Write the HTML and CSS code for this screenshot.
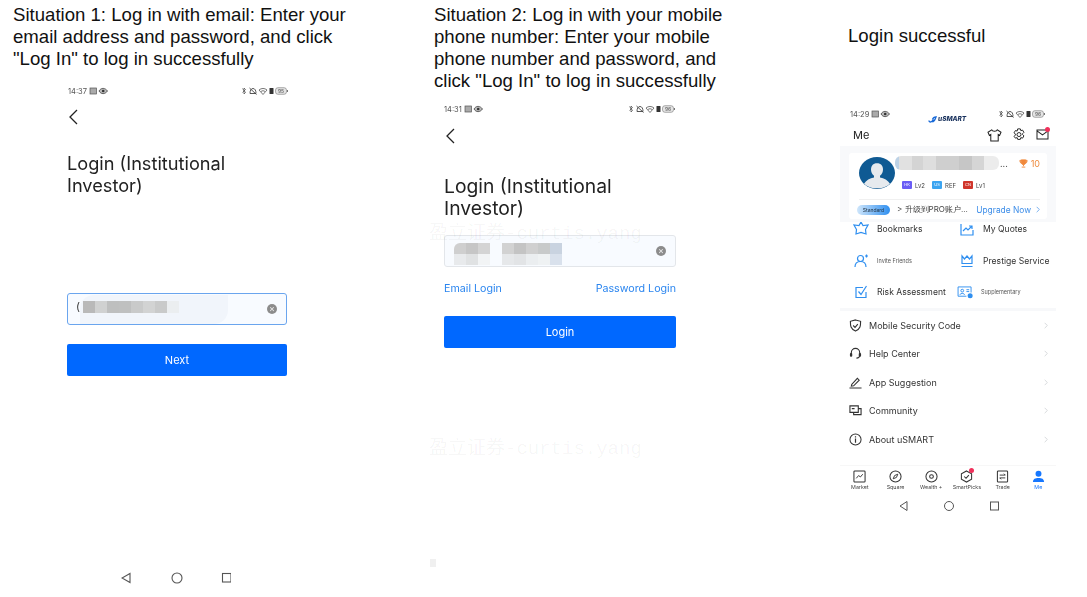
FILE: index.html
```html
<!DOCTYPE html>
<html lang="en">
<head>
    <meta charset="UTF-8">
    <title>Login situations</title>
    <link rel="stylesheet" href="styles.css">
</head>
<body>

    <!-- shared little icons -->
    <svg class="defs" width="0" height="0">
        <symbol id="status-right" viewBox="0 0 48 8">
            <path d="M1.500 1.500l3 4-1.500 1.500v-6l1.500 1.500-3 3" fill="none" stroke="#444" stroke-width=".7"/>
            <path d="M9 6.500c0-3 1-5 3-5s3 2 3 5zM8.500 1l7 6.500" fill="none" stroke="#444" stroke-width=".9"/>
            <path d="M18 3c2.500-2 5.500-2 8 0l-4 4.500zM20 4.500c1.300-1 2.700-1 4 0" fill="none" stroke="#555" stroke-width=".8"/>
            <rect x="28.500" y="1" width="4" height="6" rx=".6" fill="#333"/>
            <rect x="34.500" y=".7" width="11" height="6.600" rx="2.400" fill="#e4e4e4" stroke="#777" stroke-width=".6"/>
            <rect x="46" y="3" width="1" height="2" fill="#777"/>
        </symbol>
        <symbol id="status-left" viewBox="0 0 20 8">
            <rect x="1" y="1" width="6.500" height="6" fill="#aaa" stroke="#555" stroke-width=".7"/>
            <path d="M10 4c2-3.500 6-3.500 8.500 0-2.500 3.500-6.500 3.500-8.500 0z" fill="#bbb" stroke="#444" stroke-width=".8"/>
            <circle cx="14.200" cy="4" r="1.300" fill="#333"/>
        </symbol>
        <symbol id="chevron" viewBox="0 0 6 10">
            <path d="M1 1l4 4-4 4" fill="none" stroke="currentColor" stroke-width="1"/>
        </symbol>
    </svg>

    <main class="page">

        <section class="col col-one">
            <p class="caption">Situation 1: Log in with email: Enter your email address and password, and click "Log In" to log in successfully</p>
            <div class="screen screen-one">
                <div class="status">
                    <span class="time">14:37</span>
                    <svg class="status-left"><use href="#status-left"/></svg>
                    <svg class="status-right"><use href="#status-right"/><text x="37" y="6" class="batt">95</text></svg>
                </div>
                <svg class="back" viewBox="0 0 10 16"><path d="M9 1L2 8l7 7" fill="none" stroke="#222" stroke-width="1.300"/></svg>
                <h1 class="title">Login (Institutional Investor)</h1>
                <div class="field field-focus">
                    <div class="smear"></div>
                    <span class="paren">(</span>
                    <div class="mosaic mosaic-email">
                        <i style="background:#b9b9b9"></i><i style="background:#d0d1d1"></i><i style="background:#bebfbf"></i><i style="background:#bfc0c0"></i><i style="background:#c9caca"></i><i style="background:#d2d3d3"></i><i style="background:#c9caca"></i><i style="background:#ebeef0"></i>
                    </div>
                    <span class="clear">×</span>
                </div>
                <button class="submit">Next</button>
            </div>
            <svg class="nav nav-big" viewBox="0 0 110 12">
                <path d="M9 1.500v9L1 6z" fill="none" stroke="#555" stroke-width="1.100"/>
                <circle cx="56" cy="6" r="5" fill="none" stroke="#555" stroke-width="1.100"/>
                <rect x="101.500" y="1.500" width="8.500" height="8.500" fill="none" stroke="#555" stroke-width="1.100"/>
            </svg>
        </section>

        <section class="col col-two">
            <p class="caption">Situation 2: Log in with your mobile phone number: Enter your mobile phone number and password, and click "Log In" to log in successfully</p>
            <div class="screen screen-two">
                <div class="status">
                    <span class="time">14:31</span>
                    <svg class="status-left"><use href="#status-left"/></svg>
                    <svg class="status-right"><use href="#status-right"/><text x="37" y="6" class="batt">96</text></svg>
                </div>
                <svg class="back" viewBox="0 0 10 16"><path d="M9 1L2 8l7 7" fill="none" stroke="#222" stroke-width="1.300"/></svg>
                <h1 class="title">Login (Institutional Investor)</h1>
                <div class="field">
                    <div class="mosaic mosaic-phone">
                        <i style="background:#cfcfcf"></i><i style="background:#c6c6c6"></i><i style="background:#d4d4d4"></i><b></b><i style="background:#d2d2d2"></i><i style="background:#c4c4c4"></i><i style="background:#d0d0d0"></i><i style="background:#c8caca"></i><i style="background:#c9d3e0"></i>
                        <i style="background:#e8eaec"></i><i style="background:#e0e2e3"></i><i style="background:#f2f4f5"></i><b></b><i style="background:#e6e8ea"></i><i style="background:#e2e4e6"></i><i style="background:#ebeef0"></i><i style="background:#eff2f3"></i><i style="background:#d9e1ec"></i>
                    </div>
                    <span class="clear">×</span>
                </div>
                <div class="links">
                    <a>Email Login</a>
                    <a>Password Login</a>
                </div>
                <button class="submit">Login</button>
            </div>
        </section>

        <section class="col col-three">
            <p class="caption">Login successful</p>
            <div class="screen screen-three">
                <div class="status status-me">
                    <span class="time">14:29</span>
                    <svg class="status-left"><use href="#status-left"/></svg>
                    <span class="logo"><svg viewBox="0 0 10 8" width="9" height="7"><path d="M1 5c0 3 4 2 5-1M5 4c1-3 3-3 4-3-1 2-1 5-4 6" fill="none" stroke="#1769d8" stroke-width="1.600"/></svg>uSMART</span>
                    <svg class="status-right"><use href="#status-right"/><text x="37" y="6" class="batt">96</text></svg>
                </div>
                <header class="me-head">
                    <span class="me-title">Me</span>
                    <svg viewBox="0 0 16 14" width="15" height="13"><path d="M5 1L1 3.500 2.500 7 4 6v7h8V6l1.500 1L15 3.500 11 1c-.5 2-5.500 2-6 0z" fill="none" stroke="#222" stroke-width="1.100"/></svg>
                    <svg viewBox="0 0 16 16" width="14" height="14"><path d="M6.500 1h3l.6 2 2-.6 1.500 2.600-1.500 1.500v1l1.500 1.500-1.500 2.600-2-.6-.6 2h-3l-.6-2-2 .6L2.400 9.500 3.900 8V7L2.400 5.500l1.500-2.600 2 .6z" fill="none" stroke="#222" stroke-width="1.100"/><circle cx="8" cy="7.500" r="2.300" fill="none" stroke="#222" stroke-width="1.100"/></svg>
                    <span class="mail">
                        <svg viewBox="0 0 14 12" width="13" height="11"><path d="M1 1h12v10H1zM1 2l6 4.500L13 2" fill="none" stroke="#222" stroke-width="1.100"/></svg>
                        <i class="red-dot"></i>
                    </span>
                </header>

                <div class="card-band">
                    <div class="card">
                        <div class="profile">
                            <svg class="avatar" viewBox="0 0 36 36" preserveAspectRatio="none">
                                <circle cx="18" cy="18" r="18" fill="#0f5a93"/>
                                <path d="M18 7c4 0 6 3 6 7 0 3-1 5-3 7v2c4 1 8 3 10 7-6 7-20 7-26 0 2-4 6-6 10-7v-2c-2-2-3-4-3-7 0-4 2-7 6-7z" fill="#e6eaee"/>
                            </svg>
                            <div class="profile-main">
                                <div class="name-row">
                                    <div class="mosaic-name"></div>
                                    <span class="dots">...</span>
                                    <span class="score">
                                        <svg viewBox="0 0 10 10" width="9" height="9"><path d="M2.500 1h5v3c0 3-5 3-5 0zM1 1.500h8M1 1.500c0 2 .5 3 2 3M9 1.500c0 2-.5 3-2 3M5 6v2M3 9h4" fill="#f0883a" stroke="#f0883a"/></svg>
                                        10
                                    </span>
                                </div>
                                <div class="levels">
                                    <i class="lv lv-hk">HK</i><span>Lv2</span>
                                    <i class="lv lv-us">US</i><span>REF</span>
                                    <i class="lv lv-cn">CN</i><span>Lv1</span>
                                </div>
                            </div>
                        </div>
                        <div class="upgrade">
                            <span class="pill">Standard</span>
                            <span class="upgrade-text">&gt; 升级到PRO账户...</span>
                            <span class="upgrade-link">Upgrade Now</span>
                            <svg class="upgrade-chevron"><use href="#chevron"/></svg>
                        </div>
                    </div>
                </div>

                <div class="feature-clip">
                    <div class="features">
                        <div class="feature feature-top">
                            <svg viewBox="0 0 16 14" width="16" height="14"><path d="M8 1l2 3.500 5-.5-2.500 4.500L13 13l-5-1.500L3 13l.5-4.500L1 4l5 .5z" fill="none" stroke="#2f8ff0" stroke-width="1.200"/></svg>
                            <span>Bookmarks</span>
                        </div>
                        <div class="feature">
                            <svg viewBox="0 0 14 14" width="14" height="14"><path d="M1 2v11h12V8M3 9l3-3 2 2 4-4M9 4h3v3" fill="none" stroke="#2f8ff0" stroke-width="1.200"/></svg>
                            <span>My Quotes</span>
                        </div>
                        <div class="feature">
                            <svg viewBox="0 0 14 14" width="14" height="14"><circle cx="6.500" cy="4.500" r="3" fill="none" stroke="#2f8ff0" stroke-width="1.200"/><path d="M1 13c0-4 2-5.500 5.500-5.500S12 9 12 13M11 2h3M12.500 .5v3" fill="none" stroke="#2f8ff0" stroke-width="1.200"/></svg>
                            <small>Invite Friends</small>
                        </div>
                        <div class="feature">
                            <svg viewBox="0 0 14 14" width="14" height="14"><path d="M2 9.500V2l2.500 3L7 2l2.500 3L12 2v7.500zM1.500 12.500h11" fill="none" stroke="#2f8ff0" stroke-width="1.200"/></svg>
                            <span>Prestige Service</span>
                        </div>
                        <div class="feature">
                            <svg viewBox="0 0 14 14" width="14" height="14"><path d="M12 7v5.500H2v-10h7M4.500 6.500L7 9.500 12.500 1" fill="none" stroke="#2f8ff0" stroke-width="1.200"/></svg>
                            <span>Risk Assessment</span>
                        </div>
                        <div class="feature feature-wide">
                            <svg viewBox="0 0 18 14" width="17" height="13"><path d="M10 11H1V1h14v6" fill="none" stroke="#2f8ff0" stroke-width="1"/><circle cx="5.500" cy="5" r="1.500" fill="none" stroke="#2f8ff0"/><path d="M3 9.500c0-2 5-2 5 0M10 4h3M10 6h3" fill="none" stroke="#2f8ff0"/><circle cx="14" cy="10.500" r="2.700" fill="#2f8ff0"/></svg>
                            <small>Supplementary</small>
                        </div>
                    </div>
                </div>

                <ul class="menu">
                    <li>
                        <svg viewBox="0 0 14 14" width="13" height="13"><path d="M7 1l5.500 1.500c0 5 0 8-5.500 10.500C1.500 10.500 1.500 7.500 1.500 2.500zM4.500 7L6.500 9l3-3.500" fill="none" stroke="#333" stroke-width="1.200"/></svg>
                        <span>Mobile Security Code</span>
                        <svg class="menu-chevron"><use href="#chevron"/></svg>
                    </li>
                    <li>
                        <svg viewBox="0 0 14 14" width="13" height="13"><path d="M2.500 8V6a4.500 4.500 0 0 1 9 0v3c0 2-1.500 3-3.500 3" fill="none" stroke="#333" stroke-width="1.200"/><rect x="1" y="6.500" width="2.500" height="4" rx="1" fill="#333"/><rect x="10.500" y="6.500" width="2.500" height="4" rx="1" fill="#333"/></svg>
                        <span>Help Center</span>
                        <svg class="menu-chevron"><use href="#chevron"/></svg>
                    </li>
                    <li>
                        <svg viewBox="0 0 14 14" width="13" height="13"><path d="M3 9l6-6.500 2 2L5 10.500l-2.500.5zM.5 13h13" fill="none" stroke="#333" stroke-width="1.100"/></svg>
                        <span>App Suggestion</span>
                        <svg class="menu-chevron"><use href="#chevron"/></svg>
                    </li>
                    <li>
                        <svg viewBox="0 0 14 14" width="13" height="13"><path d="M1 2h9v7H1zM10.500 5h2.500v6.500H5V9.500M3 5h3" fill="none" stroke="#333" stroke-width="1.200"/></svg>
                        <span>Community</span>
                        <svg class="menu-chevron"><use href="#chevron"/></svg>
                    </li>
                    <li>
                        <svg viewBox="0 0 14 14" width="13" height="13"><circle cx="7" cy="7" r="6" fill="none" stroke="#333" stroke-width="1.100"/><path d="M7 6v4.500M7 3.500v1.300" fill="none" stroke="#333" stroke-width="1.300"/></svg>
                        <span>About uSMART</span>
                        <svg class="menu-chevron"><use href="#chevron"/></svg>
                    </li>
                </ul>

                <nav class="tabs">
                    <div class="tab">
                        <svg viewBox="0 0 14 14" width="13" height="13"><rect x="1" y="1" width="12" height="12" rx="1" fill="none" stroke="#333" stroke-width="1.100"/><path d="M3.500 9l2.500-3 2 1.500 2.500-3" fill="none" stroke="#333"/></svg>
                        <span>Market</span>
                    </div>
                    <div class="tab">
                        <svg viewBox="0 0 14 14" width="13" height="13"><circle cx="7" cy="7" r="6" fill="none" stroke="#333" stroke-width="1.100"/><path d="M9.500 4.500L8 8 4.500 9.500 6 6z" fill="none" stroke="#333"/></svg>
                        <span>Square</span>
                    </div>
                    <div class="tab">
                        <svg viewBox="0 0 14 14" width="13" height="13"><circle cx="7" cy="7" r="6" fill="none" stroke="#333" stroke-width="1.100"/><circle cx="7" cy="7" r="2" fill="none" stroke="#333" stroke-width="1.100"/></svg>
                        <span>Wealth +</span>
                    </div>
                    <div class="tab">
                        <span class="tab-icon">
                            <svg viewBox="0 0 14 14" width="13" height="13"><path d="M7 1l5.500 3v6L7 13l-5.500-3V4zM4.500 7L6.500 9l3-3.500" fill="none" stroke="#333" stroke-width="1.100"/></svg>
                            <i class="red-dot"></i>
                        </span>
                        <span>SmartPicks</span>
                    </div>
                    <div class="tab">
                        <svg viewBox="0 0 14 14" width="13" height="13"><rect x="1.500" y="1" width="11" height="12" rx="1" fill="none" stroke="#333" stroke-width="1.100"/><path d="M4 5.500h6L8.500 4M10 8.500H4L5.500 10" fill="none" stroke="#333"/></svg>
                        <span>Trade</span>
                    </div>
                    <div class="tab tab-active">
                        <svg viewBox="0 0 14 14" width="13" height="13"><circle cx="7" cy="4" r="3.200" fill="#1677ff"/><path d="M1 13c0-3.500 2.500-4.500 6-4.500s6 1 6 4.500z" fill="#1677ff"/></svg>
                        <span>Me</span>
                    </div>
                </nav>
                <svg class="nav nav-small" viewBox="0 0 100 12">
                    <path d="M8 1.500v9L1 6z" fill="none" stroke="#555" stroke-width="1"/>
                    <circle cx="50" cy="6" r="4.500" fill="none" stroke="#555" stroke-width="1"/>
                    <rect x="91.500" y="2" width="8" height="8" fill="none" stroke="#555" stroke-width="1"/>
                </svg>
            </div>
        </section>

        <!-- faint watermarks over the screenshots -->
        <span class="mark mark-a">盈立证券-curtis.yang</span>
        <span class="mark mark-b">盈立证券-curtis.yang</span>
        <i class="speck"></i>
    </main>

</body>
</html>
```

FILE: styles.css
```css
* {
    box-sizing: border-box;
}
body {
    margin: 0;
    background: #ffffff;
    font-family: "Inter", "Noto Sans", sans-serif;
    color: #222;
}
.defs {
    position: absolute;
}
.page {
    position: relative;
    display: grid;
    grid-template-columns: 430px 410px 1fr;
    width: 1087px;
    height: 597px;
    overflow: hidden;
}
.col {
    display: flex;
    flex-direction: column;
    height: 597px;
    min-width: 0;
}
.caption {
    margin: 0;
    font-family: "Liberation Sans", Arial, sans-serif;
    font-size: 18.6px;
    line-height: 22px;
    color: #111;
}
.col-one .caption {
    padding: 4px 0 0 13px;
    width: 350px;
}
.col-two .caption {
    padding: 4px 0 0 4px;
    width: 305px;
}
.col-three .caption {
    padding: 25px 0 0 8px;
}

/* phone screens */
.screen {
    filter: blur(.35px);
}
.screen-one {
    width: 220px;
    margin: 14px 0 0 67px;
}
.screen-two {
    width: 232px;
    margin: 10px 0 0 14px;
}
.screen-three {
    width: 216px;
    margin-top: 60px;
}
.status {
    display: flex;
    align-items: center;
    height: 14px;
    gap: 2px;
}
.screen-one .status {
    padding-left: 1px;
    margin-right: -2px;
}
.time {
    font-size: 7.500px;
    color: #555;
}
.status-left {
    width: 20px;
    height: 8px;
}
.status-right {
    width: 48px;
    height: 8px;
    margin-left: auto;
}
.batt {
    font-size: 5px;
    fill: #555;
}
.back {
    display: block;
    width: 10px;
    height: 16px;
    margin: 11px 0 0 1px;
}
.screen-two .back {
    margin-top: 12px;
}
.title {
    margin: 20px 0 0;
    font-size: 18.500px;
    font-weight: 400;
    line-height: 22px;
    color: #222;
}
.screen-one .title {
    font-size: 18.200px;
    width: 190px;
    margin-top: 27px;
}
.screen-two .title {
    font-size: 19.300px;
    width: 200px;
    margin-top: 31px;
}
.field {
    position: relative;
    height: 32px;
    margin-top: 16px;
    background: #f8fbff;
    border: 1px solid #e3e6ea;
    border-radius: 3px;
}
.screen-one .field {
    margin-top: 97px;
}
.field-focus {
    border-color: #6aa5ee;
}
.clear {
    position: absolute;
    top: 10px;
    right: 9px;
    width: 10px;
    height: 10px;
    border-radius: 50%;
    background: #8c8c8c;
    color: #eee;
    font-size: 9px;
    line-height: 10px;
    text-align: center;
}
.paren {
    position: absolute;
    top: 5px;
    left: 8px;
    font-size: 11px;
    color: #333;
}
.mosaic {
    position: absolute;
    display: grid;
}
.mosaic i {
    display: block;
}
.mosaic-email {
    top: 7px;
    left: 15px;
    grid-template-columns: repeat(8, 12px);
    height: 12px;
}
.smear {
    position: absolute;
    top: 1px;
    left: 12px;
    width: 148px;
    height: 29px;
    background: #f1f5fb;
    border-radius: 14px 0 14px 0;
}
.mosaic-phone {
    top: 7px;
    left: 9px;
    grid-template-columns: repeat(9, 12px);
    grid-template-rows: 11px 11px;
}
.mosaic-phone i:first-child {
    border-top-left-radius: 6px;
}
.submit {
    display: block;
    width: 100%;
    height: 32px;
    margin-top: 19px;
    padding: 0;
    border: 0;
    border-radius: 2px;
    background: #0068ff;
    color: #fff;
    font-family: inherit;
    font-size: 11px;
}
.links {
    display: flex;
    justify-content: space-between;
    height: 16px;
    margin-top: 14px;
    font-size: 10.700px;
    line-height: 16px;
    color: #2a85ef;
}
.screen-two .submit {
    margin-top: 19px;
}
.nav {
    display: block;
}
.nav-big {
    width: 110px;
    height: 12px;
    margin: auto 0 13px 121px;
}

/* third screen: account page */
.status-me {
    position: relative;
    padding: 0 10px;
}
.logo {
    position: absolute;
    top: 8px;
    left: 88px;
    display: flex;
    align-items: center;
    gap: 1px;
    font-size: 6.500px;
    font-weight: 800;
    font-style: italic;
    color: #17305c;
}
.me-head {
    display: flex;
    align-items: center;
    gap: 10px;
    height: 22px;
    margin-top: 3px;
    padding: 0 7px 0 13px;
}
.me-title {
    margin-right: auto;
    font-size: 11px;
}
.mail,
.tab-icon {
    position: relative;
    display: block;
    height: 13px;
}
.mail svg,
.tab-icon svg {
    display: block;
}
.red-dot {
    position: absolute;
    top: -2px;
    right: -1px;
    width: 5px;
    height: 5px;
    border-radius: 50%;
    background: #f0305a;
}
.card-band {
    position: relative;
    z-index: 1;
    height: 76px;
    padding: 7px 9px 3px;
    background: #f8f9fb;
}
.card {
    height: 66px;
    padding: 4px 7px 0 10px;
    background: #fff;
    border-radius: 3px;
}
.profile {
    display: flex;
    height: 43px;
    border-bottom: 1px solid #f0f0f0;
}
.avatar {
    width: 36px;
    height: 32px;
    flex: none;
}
.profile-main {
    flex: 1;
    min-width: 0;
}
.name-row {
    display: flex;
    align-items: center;
    height: 16px;
    margin-top: -2px;
}
.mosaic-name {
    width: 104px;
    height: 14px;
    border-radius: 6px;
    background: linear-gradient(90deg, #bdd2e6 0 4%, #e1e1e1 4% 16%, #d4d4d4 16% 27%, #dedede 27% 39%, #cfcfcf 39% 62%, #c6c6c6 62% 74%, #d5d5d5 74% 86%, #ececec 86%);
}
.dots {
    margin-left: 1px;
    font-size: 9px;
    color: #555;
}
.score {
    display: flex;
    align-items: center;
    gap: 3px;
    margin-left: auto;
    font-size: 9px;
    color: #ee8a3c;
}
.levels {
    display: flex;
    align-items: center;
    gap: 3px;
    margin: 10px 0 0 7px;
    font-size: 6px;
    color: #444;
}
.levels span {
    margin-right: 4px;
}
.lv {
    width: 10px;
    height: 8px;
    border-radius: 1px;
    color: #fff;
    font-size: 4px;
    font-style: normal;
    line-height: 8px;
    text-align: center;
}
.lv-hk {
    background: #6a5cf5;
}
.lv-us {
    background: #3ba4f0;
}
.lv-cn {
    background: #d0352b;
}
.upgrade {
    display: flex;
    align-items: center;
    height: 19px;
    margin-left: -2px;
    font-size: 8px;
}
.pill {
    width: 33px;
    height: 10px;
    margin-right: 7px;
    border-radius: 5px;
    background: linear-gradient(90deg, #cfe6fb, #2f8ff0);
    color: #234;
    font-size: 5px;
    line-height: 10px;
    text-align: center;
}
.upgrade-text {
    color: #444;
}
.upgrade-link {
    margin-left: auto;
    font-size: 8.400px;
    color: #3b8ce8;
}
.upgrade-chevron {
    width: 4px;
    height: 7px;
    margin-left: 5px;
    color: #3b8ce8;
}
.feature-clip {
    padding-bottom: 8px;
}
.features {
    display: grid;
    grid-template-columns: 106px 1fr;
    grid-auto-rows: 16px;
    row-gap: 15.500px;
    margin-top: -1px;
    padding-left: 13px;
}
.feature {
    display: flex;
    align-items: center;
    gap: 8px;
    font-size: 8.600px;
    color: #333;
}
.feature svg {
    flex: none;
    width: 16px;
}
.feature-top svg {
    margin-top: -3px;
}
.feature small {
    font-size: 5.500px;
    color: #555;
}
.feature-wide {
    margin-left: -2px;
    gap: 7px;
}
.feature-wide svg {
    width: 17px;
}
.menu {
    margin: 0;
    padding: 0;
    list-style: none;
    border-top: 3px solid #f7f8fa;
}
.menu li {
    display: flex;
    align-items: center;
    gap: 7px;
    height: 28.500px;
    padding: 0 8px 0 9px;
    font-size: 9px;
    color: #333;
}
.menu-chevron {
    width: 4px;
    height: 7px;
    margin-left: auto;
    color: #c4c8cc;
}
.tabs {
    display: grid;
    grid-template-columns: repeat(6, 35.700px);
    margin-top: 11px;
    padding: 4px 0 0 2px;
    border-top: 1px solid #f7f7f7;
}
.tab {
    display: flex;
    flex-direction: column;
    align-items: center;
    gap: 1.500px;
    font-size: 5.300px;
    white-space: nowrap;
    color: #444;
}
.tab-active {
    color: #1677ff;
}
.nav-small {
    width: 100px;
    height: 12px;
    margin: 10px 0 0 59px;
}

/* watermarks */
.mark {
    position: absolute;
    font-family: "Liberation Mono", "Noto Sans CJK SC", monospace;
    font-size: 19px;
    color: rgba(0, 0, 0, .045);
    white-space: nowrap;
    pointer-events: none;
}
.mark-a {
    top: 217px;
    left: 429px;
}
.mark-b {
    top: 432px;
    left: 429px;
}
.speck {
    position: absolute;
    top: 559px;
    left: 430px;
    width: 6px;
    height: 8px;
    background: #f0f0f0;
}
```
